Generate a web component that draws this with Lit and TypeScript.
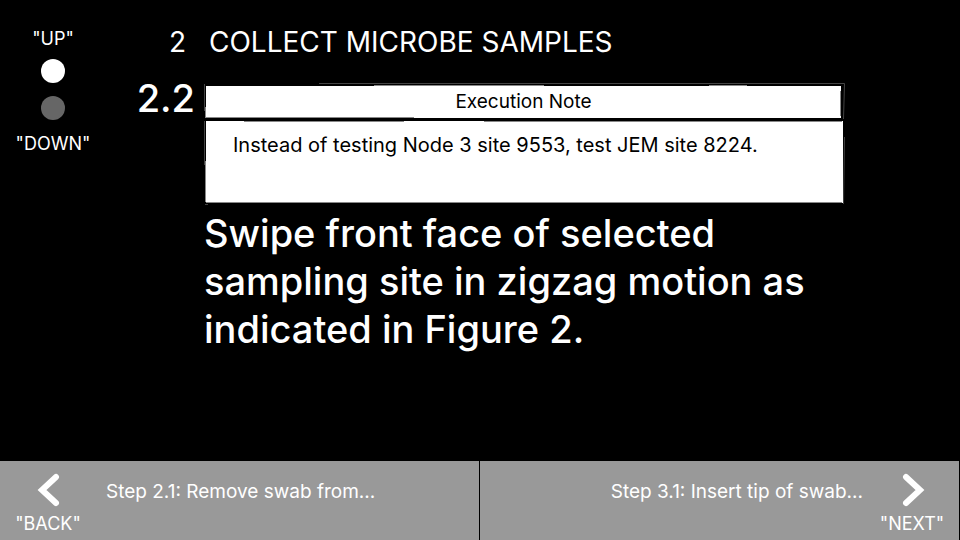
import { LitElement, html, css, svg } from "lit";
import { customElement, property } from "lit/decorators.js";

/** Note card drawn with slightly uneven, hand-sketched edges. */
@customElement("execution-note")
class ExecutionNote extends LitElement {
  @property() heading = "";
  @property() text = "";

  static styles = css`
    :host { display: block; color: #000; line-height: 24px; }
    .card { position: relative; display: flex; flex-direction: column; gap: 3px; padding: 3px 2px 2px 2px; }
    .heading { margin: 0 2px 0 0; padding: 4px 12px; background: #fff; font-size: 19px; font-weight: 400; text-align: center; }
    .body { margin: 0; padding: 12px 27px 46px; background: #fff; font-size: 20px; }
    .sketch { position: absolute; inset: 0; width: 100%; height: 100%; pointer-events: none; }
    .light { fill: none; stroke: #444; stroke-width: 1; vector-effect: non-scaling-stroke; }
    .dark { fill: none; stroke: #888; stroke-width: 1; vector-effect: non-scaling-stroke; }
  `;

  render() {
    return html`
      <section class="card">
        <h2 class="heading">${this.heading}</h2>
        <p class="body">${this.text}</p>
        <svg class="sketch" viewBox="0 0 641 122" preserveAspectRatio="none" aria-hidden="true">
          ${svg`
            <path class="light" d="M.5 1V28M.5 38V82M1 121.5H4M115 .5H640.5L639.5 36M640.5 54L639.5 121"/>
            <path class="dark" d="M1.5 24V35M2 34.5H210M40 38.5H200M280 38.5H638M1.5 78V119M2 119.5H638M170 2.5H340M505 2.5H543M636.5 8V33"/>
          `}
        </svg>
      </section>
    `;
  }
}

@customElement("app-root")
class AppRoot extends LitElement {
  static styles = css`
    :host {
      display: flex; flex-direction: column; min-height: 100vh;
      background: #000; color: #fff;
      font-family: Inter, "Noto Sans", sans-serif; font-size: 18px; line-height: 24px;
    }
    button { margin: 0; padding: 0; border: 0; background: none; color: inherit; font: inherit; cursor: pointer; }
    .page { flex: 1; display: flex; }
    .rail { flex: none; width: 106px; padding-top: 27px; display: flex; flex-direction: column; align-items: center; gap: 13px; }
    .scroll { display: flex; flex-direction: column; align-items: center; gap: 8px; }
    .scroll.down { gap: 12px; }
    .dot { width: 24px; height: 24px; border-radius: 50%; background: #fff; }
    .dim { background: #666; }
    .content {
      flex: 1; display: grid; align-content: start;
      grid-template-columns: 89px 1fr; column-gap: 9px;
      padding: 25px 115px 24px 0;
    }
    .section, .title { margin: 0; font-size: 28px; line-height: 34px; font-weight: 400; }
    .section { padding-right: 9px; text-align: right; }
    .title { padding-left: 5px; }
    .step { font-size: 38px; line-height: 48px; text-align: right; font-weight: 500; }
    .note-row { margin-top: 24px; }
    .step.note-row { margin-top: 15px; }
    .instruction { grid-column: 2; margin: 4px 0 0; font-size: 38px; line-height: 48px; font-weight: 500; }
    .footer { display: grid; grid-template-columns: 1fr 1fr; gap: 1px; padding-right: 1px; }
    .nav { display: flex; height: 79px; background: #999; text-align: left; }
    .next { flex-direction: row-reverse; text-align: right; }
    .key { flex: none; width: 96px; padding-top: 12px; display: flex; flex-direction: column; align-items: center; gap: 5px; }
    .next .key { width: 94px; }
    .arrow { display: block; width: 32px; height: 34px; fill: none; stroke: #fff; stroke-width: 6; stroke-linecap: round; stroke-linejoin: miter; }
    .summary { flex: 1; padding: 19px 10px; font-size: 19px; }
    .next .summary { padding-right: 2px; }
  `;

  render() {
    return html`
      <main class="page">
        <nav class="rail" aria-label="Scroll">
          <button class="scroll">"UP"<span class="dot"></span></button>
          <button class="scroll down"><span class="dot dim"></span>"DOWN"</button>
        </nav>
        <div class="content">
          <div class="section">2</div>
          <h1 class="title">COLLECT MICROBE SAMPLES</h1>
          <div class="step note-row">2.2</div>
          <execution-note class="note-row" heading="Execution Note"
            text="Instead of testing Node 3 site 9553, test JEM site 8224."></execution-note>
          <p class="instruction">Swipe front face of selected sampling site in zigzag motion as indicated in Figure 2.</p>
        </div>
      </main>
      <footer class="footer">
        <button class="nav">
          <span class="key">
            <svg class="arrow" viewBox="0 0 32 34" aria-hidden="true"><path d="M24 4L10 17L24 30"/></svg>
            "BACK"
          </span>
          <span class="summary">Step 2.1: Remove swab from...</span>
        </button>
        <button class="nav next">
          <span class="key">
            <svg class="arrow" viewBox="0 0 32 34" aria-hidden="true"><path d="M10 4L24 17L10 30"/></svg>
            "NEXT"
          </span>
          <span class="summary">Step 3.1: Insert tip of swab...</span>
        </button>
      </footer>
    `;
  }
}
